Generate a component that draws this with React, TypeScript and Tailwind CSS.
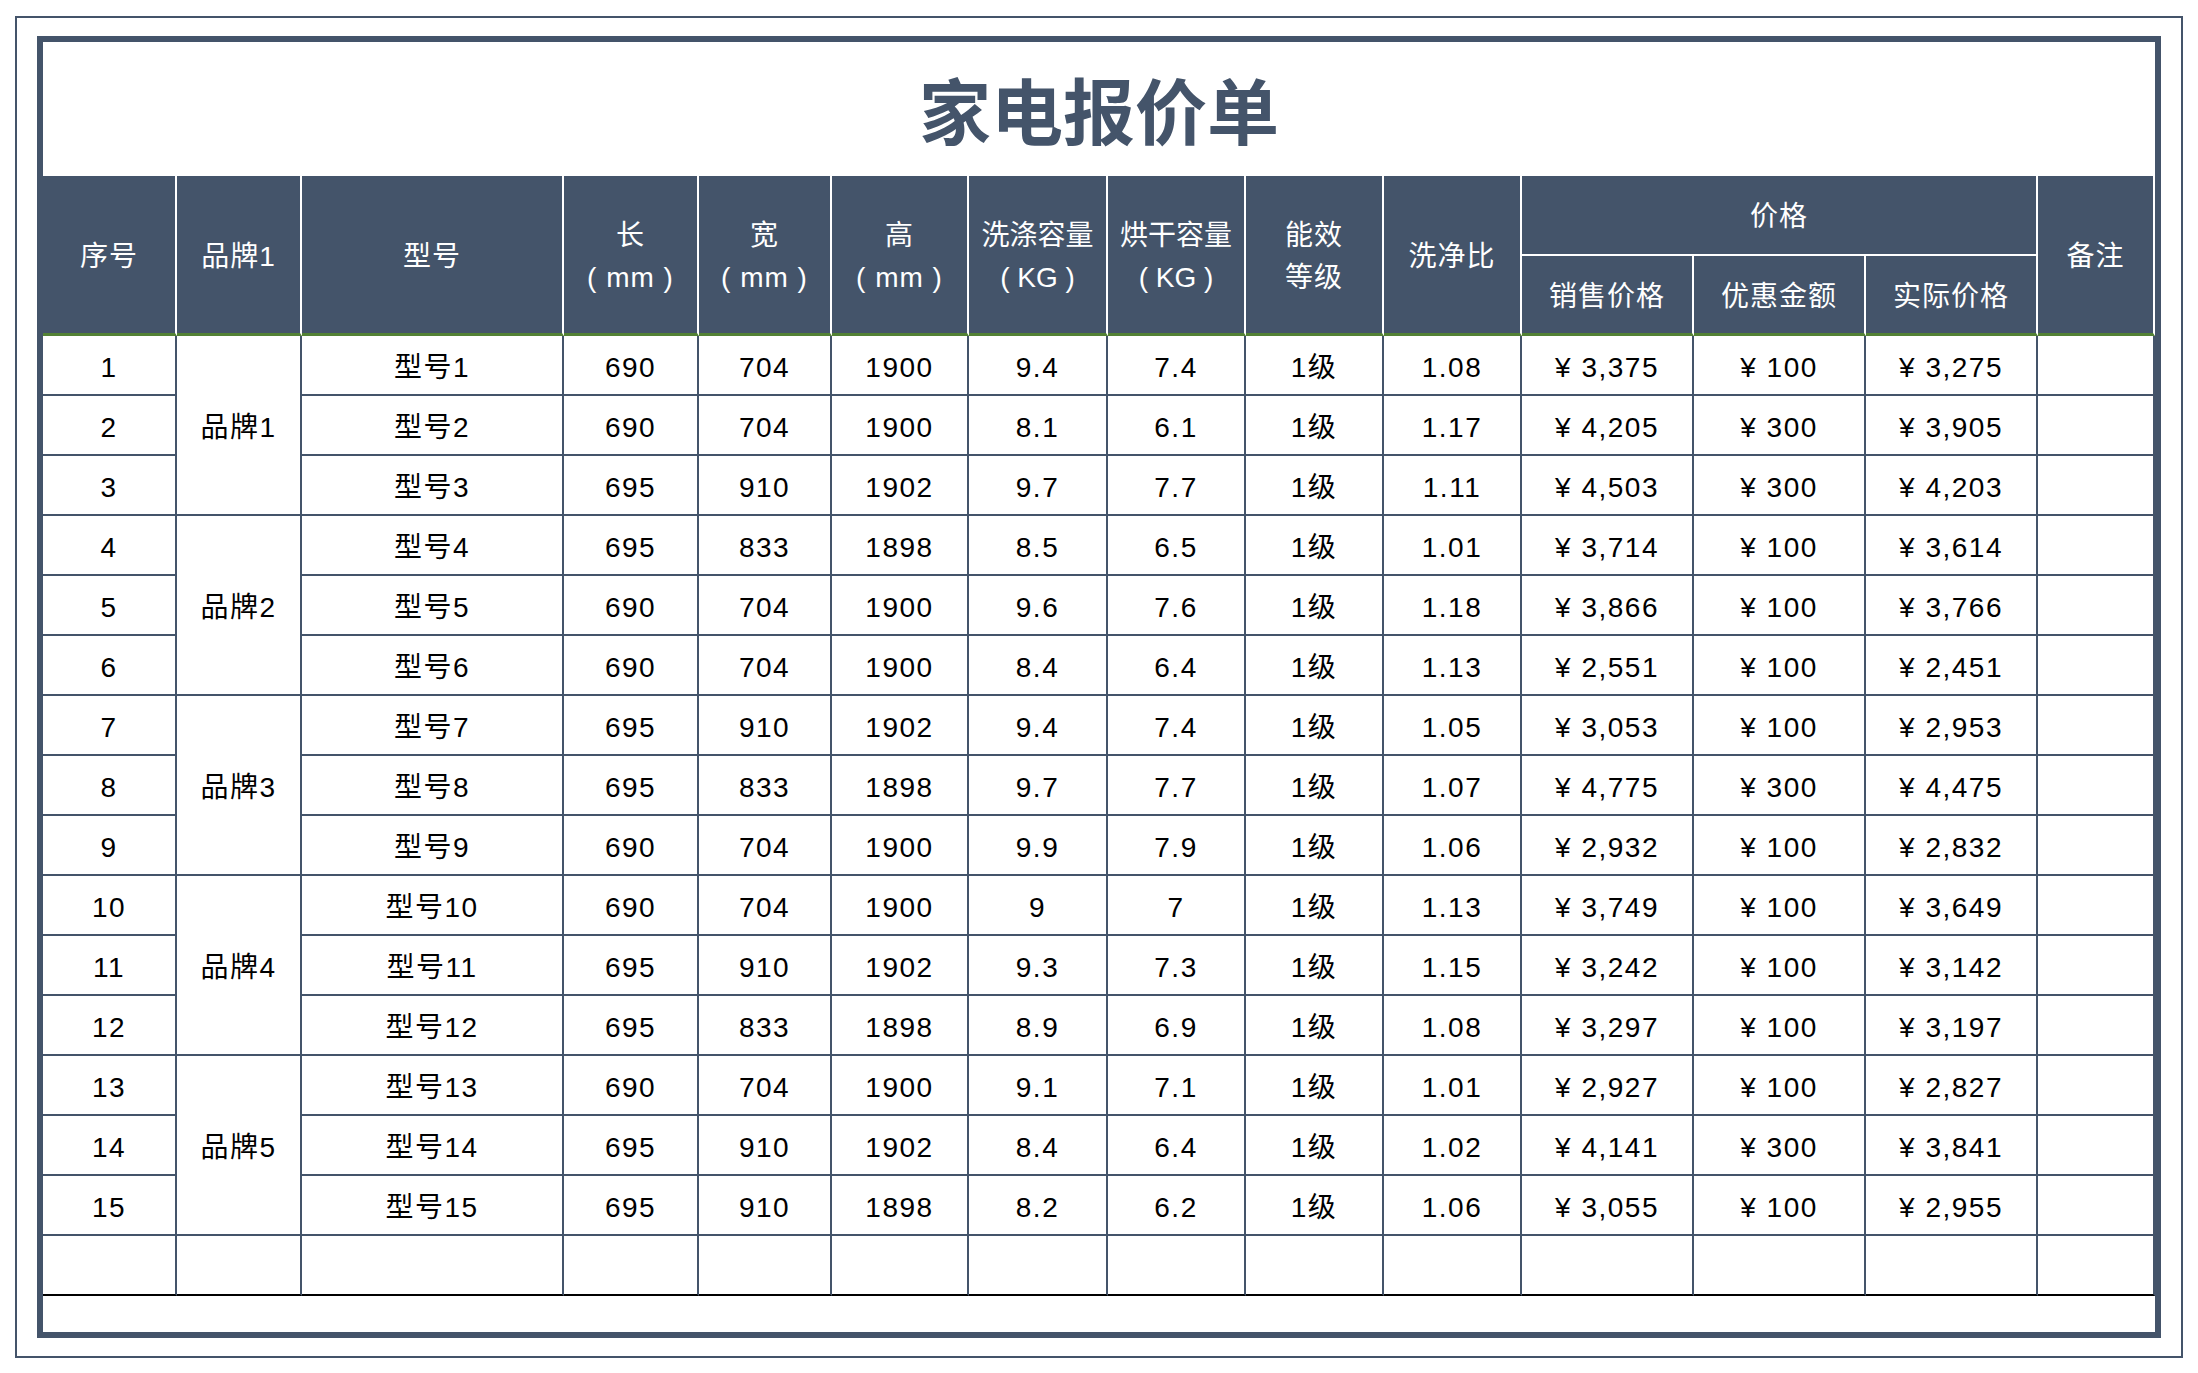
const rows = [
  ["1", "品牌1", "型号1", "690", "704", "1900", "9.4", "7.4", "1级", "1.08", "3,375", "100", "3,275"],
  ["2", "", "型号2", "690", "704", "1900", "8.1", "6.1", "1级", "1.17", "4,205", "300", "3,905"],
  ["3", "", "型号3", "695", "910", "1902", "9.7", "7.7", "1级", "1.11", "4,503", "300", "4,203"],
  ["4", "品牌2", "型号4", "695", "833", "1898", "8.5", "6.5", "1级", "1.01", "3,714", "100", "3,614"],
  ["5", "", "型号5", "690", "704", "1900", "9.6", "7.6", "1级", "1.18", "3,866", "100", "3,766"],
  ["6", "", "型号6", "690", "704", "1900", "8.4", "6.4", "1级", "1.13", "2,551", "100", "2,451"],
  ["7", "品牌3", "型号7", "695", "910", "1902", "9.4", "7.4", "1级", "1.05", "3,053", "100", "2,953"],
  ["8", "", "型号8", "695", "833", "1898", "9.7", "7.7", "1级", "1.07", "4,775", "300", "4,475"],
  ["9", "", "型号9", "690", "704", "1900", "9.9", "7.9", "1级", "1.06", "2,932", "100", "2,832"],
  ["10", "品牌4", "型号10", "690", "704", "1900", "9", "7", "1级", "1.13", "3,749", "100", "3,649"],
  ["11", "", "型号11", "695", "910", "1902", "9.3", "7.3", "1级", "1.15", "3,242", "100", "3,142"],
  ["12", "", "型号12", "695", "833", "1898", "8.9", "6.9", "1级", "1.08", "3,297", "100", "3,197"],
  ["13", "品牌5", "型号13", "690", "704", "1900", "9.1", "7.1", "1级", "1.01", "2,927", "100", "2,827"],
  ["14", "", "型号14", "695", "910", "1902", "8.4", "6.4", "1级", "1.02", "4,141", "300", "3,841"],
  ["15", "", "型号15", "695", "910", "1898", "8.2", "6.2", "1级", "1.06", "3,055", "100", "2,955"],
]

// grid line colour is Excel's blue-grey text colour
const cell = "flex items-center justify-center pt-[5px] border-b-2 border-r-2 border-[#44546a] text-[28px] text-black tracking-[1.5px]"
const head = "flex flex-col items-center justify-center pt-[4px] bg-[#44546a] text-white text-[28px] leading-[42px] tracking-[1px] border-r-2 border-white"
const headBottom = "border-b-[3px] border-b-[#538135]"

function Head({ top, sub, className = "" }: { top: string; sub?: string; className?: string }) {
  return (
    <div className={`${head} ${headBottom} row-span-2 ${className}`}>
      <span>{top}</span>
      {sub && <span>{sub}</span>}
    </div>
  )
}

export default function App() {
  return (
    <div className="bg-white min-h-screen pl-[15px] pt-[16px] [font-family:'Liberation_Sans','Noto_Sans_CJK_SC',sans-serif]">
      <div className="w-[2168px] border-2 border-[#44546a] px-[20px] pt-[18px] pb-[18px]">
        <div className="border-[6px] border-[#44546a] pb-[36px]">
          {/* title */}
          <div className="h-[134px] flex items-center justify-center pt-[10px]">
            <h1 className="text-[72px] font-bold text-[#44546a] leading-none">家电报价单</h1>
          </div>

          <div className="grid grid-cols-[134px_125px_262px_135px_133px_137px_139px_138px_138px_138px_172px_172px_172px_117px] grid-rows-[80px_80px_repeat(16,60px)]">
            <Head top="序号" />
            <Head top="品牌1" />
            <Head top="型号" />
            <Head top="长" sub="( mm )" />
            <Head top="宽" sub="( mm )" />
            <Head top="高" sub="( mm )" />
            <Head top="洗涤容量" sub="( KG )" className="tracking-normal" />
            <Head top="烘干容量" sub="( KG )" className="tracking-normal" />
            <Head top="能效" sub="等级" />
            <Head top="洗净比" />
            <div className={`${head} col-span-3 border-b-2 border-b-white`}>价格</div>
            <Head top="备注" className="border-r-0" />
            <div className={`${head} ${headBottom}`}>销售价格</div>
            <div className={`${head} ${headBottom}`}>优惠金额</div>
            <div className={`${head} ${headBottom}`}>实际价格</div>

            {rows.map((r) => (
              <Row key={r[0]} r={r} />
            ))}

            {/* blank last row */}
            {Array.from({ length: 13 }).map((_, i) => (
              <div key={i} className={`${cell} border-b-black`} />
            ))}
            <div className={`${cell} border-b-black border-r-0`} />
          </div>
        </div>
      </div>
    </div>
  )
}

function Row({ r }: { r: string[] }) {
  return (
    <>
      <div className={cell}>{r[0]}</div>
      {r[1] && <div className={`${cell} row-span-3`}>{r[1]}</div>}
      <div className={cell}>{r[2]}</div>
      <div className={cell}>{r[3]}</div>
      <div className={cell}>{r[4]}</div>
      <div className={cell}>{r[5]}</div>
      <div className={cell}>{r[6]}</div>
      <div className={cell}>{r[7]}</div>
      <div className={cell}>{r[8]}</div>
      <div className={cell}>{r[9]}</div>
      <div className={cell}>¥ {r[10]}</div>
      <div className={cell}>¥ {r[11]}</div>
      <div className={cell}>¥ {r[12]}</div>
      <div className={`${cell} border-r-0`} />
    </>
  )
}
